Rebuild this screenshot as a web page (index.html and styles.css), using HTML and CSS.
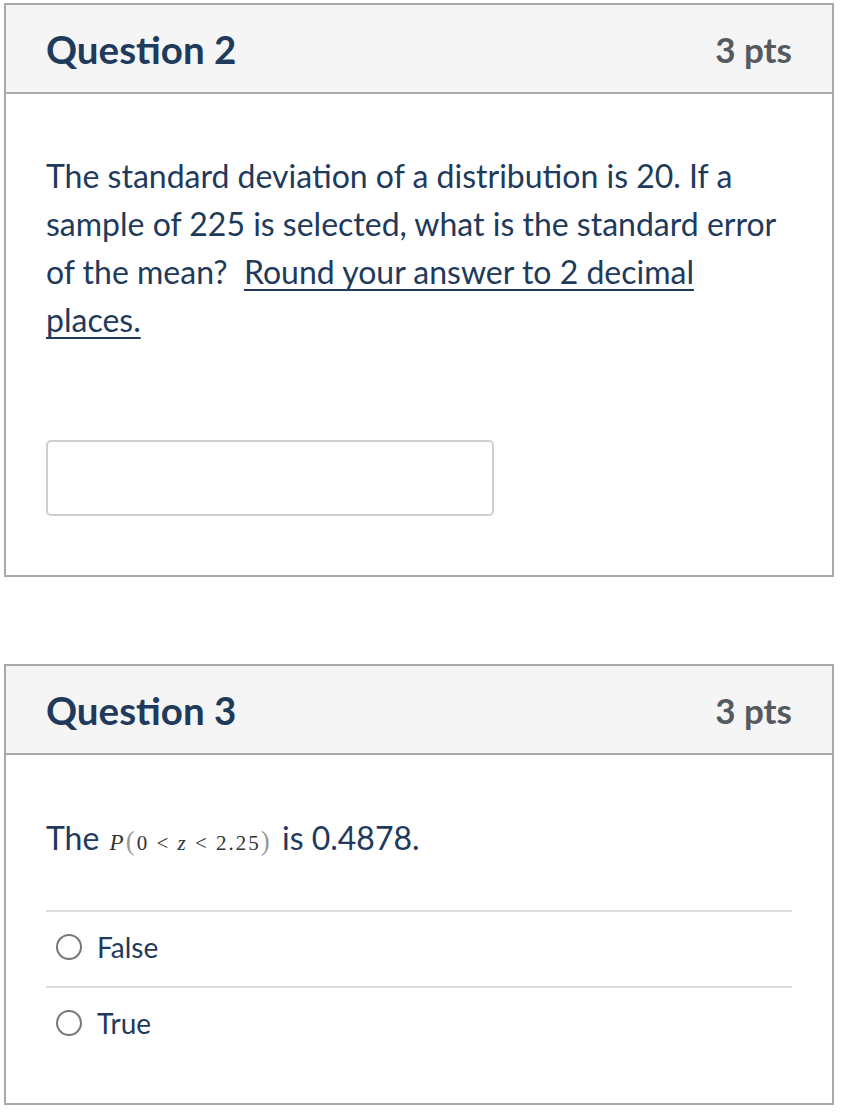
FILE: index.html
```html
<!DOCTYPE html>
<html lang="en">
<head>
<meta charset="utf-8">
<title>Quiz</title>
<link rel="stylesheet" href="styles.css">
</head>
<body>
<div class="page">
  <section class="card">
    <header class="card-header">
      <h2 class="q-title">Question 2</h2>
      <span class="pts">3 pts</span>
    </header>
    <div class="card-body body-q2">
      <p class="q-text">The standard deviation of a distribution is 20. If a sample of 225 is selected, what is the standard error of the mean?&nbsp; <u class="under">Round your answer to 2 decimal places.</u></p>
      <input class="answer-input" type="text" aria-label="Answer">
    </div>
  </section>

  <section class="card card-q3">
    <header class="card-header">
      <h2 class="q-title">Question 3</h2>
      <span class="pts">3 pts</span>
    </header>
    <div class="card-body body-q3">
      <p class="q-text q3-text">The <span class="math"><i class="m-p">P</i><span class="m-paren">(</span>0 &lt; <i>z</i> &lt; 2.25<span class="m-paren">)</span></span> is 0.4878.</p>
      <div class="answers">
        <label class="answer"><span class="radio"></span><span class="answer-label">False</span></label>
        <label class="answer"><span class="radio"></span><span class="answer-label">True</span></label>
      </div>
    </div>
  </section>
</div>
</body>
</html>
```

FILE: styles.css
```css
html, body {
  margin: 0;
  padding: 0;
  background: #ffffff;
}

.page {
  padding: 3px 10px 0 4px;
  display: flex;
  flex-direction: column;
  gap: 87px;
  font-family: Lato, "Noto Sans", sans-serif;
  color: #213a5c;
}

.card {
  border: 2px solid #a9a9a9;
  background: #fff;
}

.card-header {
  display: flex;
  align-items: center;
  justify-content: space-between;
  height: 87px;
  padding: 0 40px 0 40px;
  background: #f5f5f5;
  border-bottom: 2px solid #a9a9a9;
}

.q-title {
  margin: 0;
  font-size: 38.5px;
  font-weight: 700;
  color: #203a5c;
}

.pts {
  font-size: 35px;
  font-weight: 700;
  color: #555a5f;
}

.card-body {
  padding: 0 40px;
}

.body-q2 {
  padding-top: 58px;
  padding-bottom: 59px;
}

.q-text {
  margin: 0;
  font-size: 32px;
  line-height: 48px;
  color: #213a5c;
}

.under {
  text-decoration: underline;
  text-decoration-thickness: 2px;
  text-underline-offset: 5px;
}

.answer-input {
  display: block;
  box-sizing: border-box;
  margin-top: 96px;
  width: 448px;
  height: 76px;
  border: 2px solid #cfcfcf;
  border-radius: 5px;
  background: #fff;
  font: inherit;
}

.body-q3 {
  padding-top: 59px;
  padding-bottom: 41px;
}

.q3-text {
  margin-bottom: 43px;
}

.math {
  font-family: "Liberation Serif", "DejaVu Serif", serif;
  font-size: 21px;
  color: #333;
  letter-spacing: 2px;
  padding: 0 2px;
}

.m-p {
  font-style: italic;
  font-size: 23px;
}

.m-paren {
  font-size: 27px;
  color: #9a9a9a;
}

.answers {
  display: flex;
  flex-direction: column;
}

.answer {
  display: flex;
  align-items: center;
  gap: 15px;
  box-sizing: border-box;
  height: 76px;
  padding: 0 0 4px 10px;
  border-top: 2px solid #dcdcdc;
  font-size: 28px;
  color: #213a5c;
}

.radio {
  width: 22px;
  height: 22px;
  border: 2px solid #777;
  border-radius: 50%;
  box-sizing: content-box;
}

.answer-label {
  line-height: 1;
}
```
